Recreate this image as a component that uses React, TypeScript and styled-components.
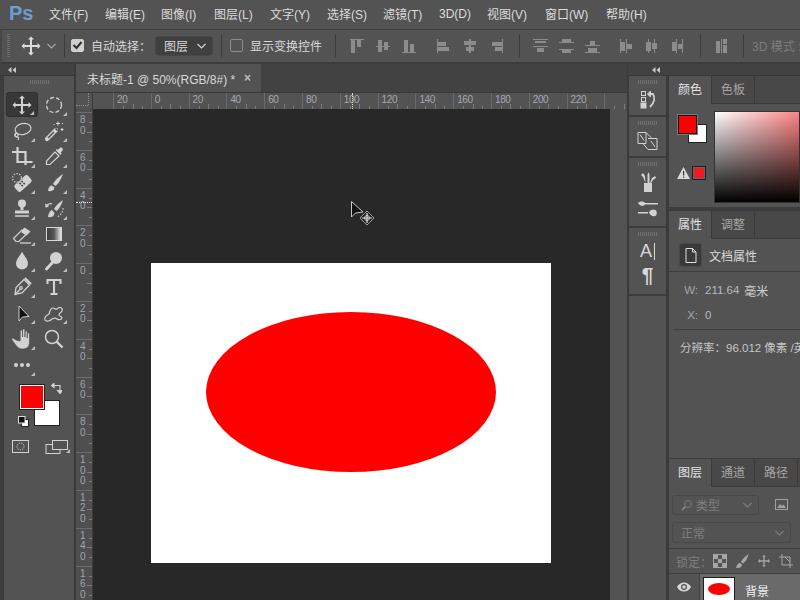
import React from "react";
import styled, { createGlobalStyle } from "styled-components";

const Global = createGlobalStyle`
  html, body { margin: 0; padding: 0; background: #535353; }
  * { box-sizing: border-box; }
`;
const FONT = `"Liberation Sans", "Noto Sans CJK SC", sans-serif`;

const Page = styled.div`
  width: 800px; height: 600px; overflow: hidden; display: flex; flex-direction: column;
  background: #535353; font-family: ${FONT}; font-size: 12px; color: #d8d8d8;
`;
const MenuBar = styled.div`
  height: 29px; flex: none; display: flex; align-items: center; padding-left: 9px; background: #535353;
`;
const Logo = styled.div`
  width: 40px; font-size: 20px; font-weight: 700; color: #6f9dcf; line-height: 24px; margin-top: -4px;
`;
const MenuItem = styled.div<{ $w: number }>`
  width: ${(p) => p.$w}px; flex: none; color: #dcdcdc; font-size: 12px; white-space: nowrap; margin-top: -2px;
`;
const OptionBar = styled.div`
  height: 35px; flex: none; display: flex; align-items: center; background: #535353;
  border-top: 1px solid #3e3e3e; border-bottom: 2px solid #3c3c3c; border-left: 2px solid #474747; padding-bottom: 1px;
`;
const Grip = styled.div`
  width: 3px; height: 23px; margin-left: 5px; flex: none;
  background: repeating-linear-gradient(to bottom, #6e6e6e 0 1px, transparent 1px 2px);
`;
const Slot = styled.div<{ $l: number }>`
  margin-left: ${(p) => p.$l}px; flex: none; display: flex; align-items: center;
`;
const MoveSlot = styled(Slot)`
  color: #dcdcdc;
`;
const ChevronSlot = styled(Slot)`
  color: #a8a8a8;
`;
const VSep = styled.div<{ $l: number }>`
  width: 1px; height: 23px; background: #3c3c3c; margin-left: ${(p) => p.$l}px; flex: none;
`;
const CheckBox = styled.div<{ $on?: boolean }>`
  width: 13px; height: 13px; border-radius: 2px; flex: none; display: flex; align-items: center; justify-content: center;
  background: ${(p) => (p.$on ? "#cfcfcf" : "transparent")};
  border: 1px solid ${(p) => (p.$on ? "#cfcfcf" : "#8d8d8d")};
`;
const OptLabel = styled.div<{ $dim?: boolean }>`
  color: ${(p) => (p.$dim ? "#7d7d7d" : "#d8d8d8")}; white-space: nowrap; font-size: 12px; letter-spacing: 0;
`;
const SelectBox = styled.div`
  width: 58px; height: 20px; background: #3f3f3f; border: 1px solid #484848; border-radius: 3px;
  display: flex; align-items: center; justify-content: space-between; padding: 0 6px 0 8px; color: #d8d8d8;
`;
const IconRow = styled.div<{ $gap: number }>`
  display: flex; gap: ${(p) => p.$gap}px; color: #8c8c8c;
`;

const Workspace = styled.div`
  flex: 1; display: flex; min-height: 0; background: #3d3d3d;
`;
const LeftDock = styled.div`
  width: 76px; flex: none; display: flex; flex-direction: column; background: #3d3d3d; border-right: 2px solid #3a3a3a;
`;
const CollapseStrip = styled.div<{ $pad: number }>`
  height: 12px; flex: none; background: #424242; border-bottom: 1px solid #383838; color: #c8c8c8;
  display: flex; align-items: center; padding-left: ${(p) => p.$pad}px;
`;
const ToolPanel = styled.div`
  flex: 1; margin-left: 3px; background: #535353; border-left: 1px solid #3a3a3a; padding-left: 2px;
`;
const PanelGrip = styled.div<{ $w?: number }>`
  width: ${(p) => p.$w ?? 20}px; height: 4px; margin: 4px auto 0;
  background: repeating-linear-gradient(to right, #6f6f6f 0 1px, transparent 1px 2px);
`;
const ToolGrid = styled.div`
  display: grid; grid-template-columns: 32px 32px; grid-auto-rows: 25px; row-gap: 1px; margin-top: 8px;
`;
const ToolCell = styled.div<{ $on?: boolean }>`
  position: relative; display: flex; align-items: center; justify-content: center; color: #d2d2d2;
  ${(p) => (p.$on ? "background:#383838;border:1px solid #2f2f2f;border-radius:3px;" : "")}
`;
const Corner = styled.span`
  position: absolute; right: 3px; bottom: 1px; width: 0; height: 0;
  border-left: 4px solid transparent; border-bottom: 4px solid #bdbdbd;
`;
const ColorWell = styled.div`
  position: relative; height: 46px; margin-top: 7px; margin-left: 0;
`;
const FgSwatch = styled.div`
  position: absolute; left: 13px; top: 0; width: 26px; height: 26px; z-index: 1; background: #ff0000;
  border: 1px solid #222; box-shadow: inset 0 0 0 1px #fff;
`;
const BgSwatch = styled.div`
  position: absolute; left: 28px; top: 16px; width: 26px; height: 26px; background: #fff; border: 1px solid #222;
`;
const SwapIcon = styled.div`
  position: absolute; left: 45px; top: -1px; color: #d2d2d2; line-height: 0;
`;
const DefaultIcon = styled.div`
  position: absolute; left: 12px; top: 32px; line-height: 0;
`;
const ModeRow = styled.div`
  display: flex; align-items: center; margin: 10px 0 0 6px; color: #d2d2d2; gap: 15px;
`;
const ScreenMode = styled.div`
  position: relative; width: 28px; height: 14px; line-height: 0; color: #d2d2d2;
`;

const DocArea = styled.div`
  flex: 1; min-width: 0; display: flex; flex-direction: column; background: #535353;
`;
const TabBar = styled.div`
  height: 29px; flex: none; display: flex; background: #424242; border-bottom: 1px solid #383838;
`;
const DocTab = styled.div`
  width: 185px; background: #535353; display: flex; align-items: center; justify-content: space-between;
  padding: 0 10px 0 11px; color: #d8d8d8; font-size: 12px; white-space: nowrap;
`;
const CloseMark = styled.span`
  font-size: 12px; font-weight: 700; color: #bdbdbd;
`;
const HRulerRow = styled.div`
  height: 16px; flex: none; display: flex; overflow: hidden;
`;
const RulerCorner = styled.div`
  width: 17px; flex: none; background: #535353; border-right: 1px solid #3a3a3a; position: relative;
`;
const CornerDotsV = styled.i`
  position: absolute; left: 12px; top: 0; height: 12px; border-left: 1px dotted #8a8a8a;
`;
const CornerDotsH = styled.i`
  position: absolute; left: 0; top: 12px; width: 12px; border-top: 1px dotted #8a8a8a;
`;
const HRuler = styled.div`
  flex: 1; display: flex; position: relative; overflow: hidden; background: #535353;
`;
const HLead = styled.div`
  width: 20px; flex: none;
`;
const HCell = styled.div`
  width: 37.8px; flex: none; height: 16px; border-left: 1px solid #6b6b6b; padding-left: 3px;
  font-size: 10px; line-height: 14px; color: #a3a9b0; letter-spacing: -0.4px;
  background-image:
    linear-gradient(#7a7a7a,#7a7a7a), linear-gradient(#7a7a7a,#7a7a7a), linear-gradient(#7a7a7a,#7a7a7a);
  background-repeat: no-repeat;
  background-size: 1px 3px, 1px 5px, 1px 3px;
  background-position: 9px 100%, 18.5px 100%, 28px 100%;
`;
const HMark = styled.i`
  position: absolute; left: 259px; top: 0; height: 16px; border-left: 1px dotted #e8e4a0;
`;
const CanvasRow = styled.div`
  flex: 1; display: flex; min-height: 0;
`;
const VRuler = styled.div`
  width: 17px; flex: none; position: relative; overflow: hidden; background: #4f4f4f; border-right: 1px solid #3c3c3c;
`;
const VLead = styled.div`
  height: 3px;
`;
const VCell = styled.div`
  height: 37.8px; border-top: 1px solid #6b6b6b; padding: 2px 0 0 4px; display: flex; flex-direction: column;
  font-size: 10px; line-height: 10.5px; color: #9ca6b2;
  background-image:
    linear-gradient(#7a7a7a,#7a7a7a), linear-gradient(#7a7a7a,#7a7a7a), linear-gradient(#7a7a7a,#7a7a7a);
  background-repeat: no-repeat;
  background-size: 3px 1px, 5px 1px, 3px 1px;
  background-position: 100% 9px, 100% 18.5px, 100% 28px;
`;
const VMark = styled.i`
  position: absolute; left: 0; top: 93px; width: 16px; border-top: 1px dotted #f0f0f0;
`;
const Canvas = styled.div`
  width: 517px; flex: none; position: relative; background: #282828; padding: 154px 0 0 58px;
`;
const Doc = styled.div`
  width: 400px; height: 300px; background: #fff; padding: 49px 0 0 55px;
`;
const Ellipse = styled.div`
  width: 290px; height: 160px; border-radius: 50%; background: #ff0000;
`;
const PointerWrap = styled.div`
  position: absolute; left: 257px; top: 91px; line-height: 0;
`;

const RightDock = styled.div`
  width: 173px; flex: none; display: flex; flex-direction: column; background: #3d3d3d; border-left: 1px solid #3c3c3c;
`;
const DockBody = styled.div`
  flex: 1; min-height: 0; display: flex;
`;
const IconColumn = styled.div`
  width: 40px; flex: none; display: flex; flex-direction: column; background: #535353;
  border-right: 2px solid #3a3a3a; border-left: 1px solid #3a3a3a;
`;
const IconGroup = styled.div<{ $h: number }>`
  height: ${(p) => p.$h}px; flex: none; display: flex; flex-direction: column; align-items: center; padding-top: 0;
  border-bottom: 2px solid #3c3c3c; color: #d2d2d2;
`;
const IconSlot = styled.div<{ $top?: number }>`
  height: 26px; flex: none; display: flex; align-items: center; justify-content: center; margin-top: ${(p) => p.$top ?? 0}px;
`;
const GlyphA = styled.div`
  height: 24px; margin-top: 3px; flex: none; display: flex; align-items: center; justify-content: center;
  font-size: 18px; color: #d8d8d8; line-height: 24px;
`;
const CaretBar = styled.i`
  display: block; width: 1px; height: 17px; margin-left: 2px; background: #d8d8d8;
`;
const GlyphPil = styled.div`
  height: 24px; flex: none; display: flex; align-items: center; justify-content: center;
  font-size: 21px; font-weight: 700; color: #d8d8d8; line-height: 24px;
`;
const PanelStack = styled.div`
  flex: 1; min-width: 0; display: flex; flex-direction: column;
`;
const Panel = styled.div<{ $h: number; $gap?: number }>`
  height: ${(p) => p.$h}px; flex: none; background: #535353; margin-bottom: ${(p) => p.$gap ?? 0}px;
  display: flex; flex-direction: column; border-left: 1px solid #3a3a3a; overflow: hidden;
`;
const Tabs = styled.div`
  height: 28px; flex: none; display: flex; background: #484848; border-bottom: 1px solid #3a3a3a;
`;
const Tab = styled.div<{ $on?: boolean }>`
  width: 43px; height: ${(p) => (p.$on ? 28 : 27)}px; flex: none; display: flex; align-items: center; justify-content: center;
  padding-bottom: 3px; font-size: 12px; background: ${(p) => (p.$on ? "#535353" : "#484848")};
  color: ${(p) => (p.$on ? "#e4e4e4" : "#a6a6a6")}; border-right: 1px solid #3a3a3a;
`;
const ColorBody = styled.div`
  flex: 1; display: flex; padding: 7px 0 0 9px;
`;
const ColorLeft = styled.div`
  width: 36px; flex: none; position: relative;
`;
const MiniFg = styled.div`
  position: absolute; left: 0; top: 4px; width: 19px; height: 19px; background: #ff0000; z-index: 1;
  border: 1px solid #111; box-shadow: 0 0 0 1px #777;
`;
const MiniBg = styled.div`
  position: absolute; left: 10px; top: 13px; width: 19px; height: 19px; background: #fff; border: 1px solid #222;
`;
const WarnRow = styled.div`
  position: absolute; left: -1px; top: 55px; display: flex; align-items: center; gap: 2px; line-height: 0;
`;
const WarnSwatch = styled.div`
  width: 14px; height: 14px; background: #ed1c24; border: 1px solid #1e1e1e; box-shadow: 0 0 0 1px #666 inset;
`;
const Spectrum = styled.div`
  flex: 1; height: 92px; margin-top: 0; border: 1px solid #333;
  background: linear-gradient(to top, #000, transparent), linear-gradient(to right, #fff, #ff6a6a 120%);
`;
const PropHead = styled.div`
  height: 33px; flex: none; display: flex; align-items: center; gap: 7px; padding: 0 0 0 10px; border-bottom: 1px solid #3e3e3e;
  color: #d8d8d8;
`;
const DocIconBox = styled.div`
  width: 23px; height: 24px; background: #3a3a3a; border: 1px solid #4a4a4a; border-radius: 3px;
  display: flex; align-items: center; justify-content: center; color: #e0e0e0;
`;
const PropRow = styled.div<{ $h: number }>`
  height: ${(p) => p.$h}px; flex: none; display: flex; align-items: center; white-space: nowrap; color: #b6b9bc; font-size: 11.5px;
`;
const PropKey = styled.span`
  width: 36px; text-align: right; padding-right: 7px; flex: none; color: #9da6b0;
`;
const PropUnit = styled.span`
  margin-left: 5px; font-size: 12px; color: #cfcfcf;
`;
const PropLine = styled.div`
  height: 1px; background: #3e3e3e; margin: 7px 0 0 4px;
`;
const ResRow = styled.div`
  padding: 9px 0 0 11px; color: #c6c6c6; font-size: 11.5px; white-space: nowrap;
`;
const FilterRow = styled.div<{ $h: number }>`
  height: ${(p) => p.$h}px; flex: none; display: flex; align-items: center; padding-left: 3px; color: #7f7f7f;
`;
const DimSelect = styled.div<{ $w: number; $h?: number }>`
  width: ${(p) => p.$w}px; height: ${(p) => p.$h ?? 20}px; border: 1px solid #494949; border-radius: 3px; flex: none;
  display: flex; align-items: center; justify-content: space-between; padding: 0 6px 0 8px; color: #7f7f7f; gap: 4px;
`;
const DimLabel = styled.div`
  display: flex; align-items: center; gap: 3px;
`;
const LockRow = styled.div`
  height: 26px; margin-top: 5px; flex: none; display: flex; align-items: center; border-top: 1px solid #3e3e3e;
  border-bottom: 1px solid #3e3e3e; padding-left: 7px; color: #7f7f7f; gap: 0;
`;
const LockIcons = styled.div`
  display: flex; gap: 8px; margin-left: 1px; color: #a6a6a6;
`;
const LayerRow = styled.div`
  flex: 1; display: flex; min-height: 26px;
`;
const EyeCell = styled.div`
  width: 31px; flex: none; display: flex; align-items: center; justify-content: center; color: #d8d8d8; border-right: 1px solid #3e3e3e;
`;
const LayerBody = styled.div`
  flex: 1; background: #6a6a6a; display: flex; align-items: flex-start; padding: 3px 0 0 3px; color: #f2f2f2; gap: 10px;
`;
const Thumb = styled.div`
  width: 32px; height: 30px; background: #fff; border: 1px solid #1e1e1e; flex: none; padding: 5px 0 0 4px;
`;
const ThumbOval = styled.div`
  width: 22px; height: 12px; border-radius: 50%; background: #ff0000;
`;
const LayerName = styled.div`
  margin-top: 5px; font-size: 12px;
`;

type P = { w?: number; h?: number; children?: React.ReactNode };
const Svg = ({ w = 22, h = 22, children }: P) => (
  <svg width={w} height={h} viewBox={`0 0 ${w} ${h}`} fill="none" stroke="currentColor" strokeWidth="1.2" style={{ display: "block" }}>
    {children}
  </svg>
);
const MOVE = "M11 1.5l3 3h-2v5.5h5.5V8l3 3-3 3v-2H12v5.5h2l-3 3-3-3h2V12H4.5v2l-3-3 3-3v2H10V4.5H8z";
const tools: Record<string, React.ReactNode> = {
  move: <Svg><path d={MOVE} fill="currentColor" stroke="none" /></Svg>,
  marquee: <Svg><circle cx="11" cy="11" r="7.5" strokeDasharray="4 2.2" strokeWidth="1.3" /></Svg>,
  lasso: <Svg><ellipse cx="12" cy="9" rx="8" ry="5.5" transform="rotate(-12 12 9)" /><path d="M5 13c-2 2-1 4 1 4s2 1 1 3" /><circle cx="5.5" cy="15" r="1.6" /></Svg>,
  wand: <Svg><path d="M4 19l9-9" stroke="currentColor" strokeWidth="4.2" strokeLinecap="round" /><path d="M5 18l6-6" stroke="#535353" strokeWidth="1.6" /><path d="M12.5 8.5l2 2" stroke="#333" strokeWidth="1.2" /><path d="M15 1.5v4M13 3.5h4M19 8v3M17.5 9.5h3M11 4v1M19.5 3v1" strokeWidth="1.1" /></Svg>,
  crop: <Svg><path d="M6.5 1v15h15M1 6h13.5v13" strokeWidth="2.2" /></Svg>,
  dropper: <Svg><path d="M12 6L3.5 15v3.5H7L16 10z" strokeWidth="1.2" /><path d="M13 4.5l4.5 4.5 1.2-1.2-1-1 2-2.5c1-1.5-1-3.5-2.5-2.5l-2.5 2-1-1z" fill="currentColor" stroke="none" /></Svg>,
  heal: <Svg><rect x="3" y="7" width="18" height="9" rx="2.5" transform="rotate(-42 12 11.5)" fill="currentColor" stroke="none" /><path d="M10.5 9l1.3 1.3M8.5 11l1.3 1.3M12.5 11l1.3 1.3M10.5 13l1.3 1.3" stroke="#444" strokeWidth="1.6" /><circle cx="6" cy="6" r="4.4" strokeDasharray="1.4 1.4" stroke="#535353" strokeWidth="2" /><circle cx="6" cy="6" r="4.4" strokeDasharray="1.4 1.4" /></Svg>,
  brush: <Svg><path d="M20 2c-3 2-8 6-10 10l2.5 2c3-2 6-8 7.500-12z" fill="currentColor" stroke="none" /><path d="M9 13.500c-2.500 0-3.500 2-4 5.500 3 .5 6 0 6.500-3.500z" fill="currentColor" stroke="none" /></Svg>,
  stamp: <Svg><circle cx="11" cy="5.500" r="4" fill="currentColor" stroke="none" /><path d="M9.500 9h3v3h-3zM4 12.500h14v3H4z" fill="currentColor" stroke="none" /><path d="M4 18h14" strokeWidth="1.500" /></Svg>,
  history: <Svg><path d="M20 2c-3 2-7 5-9 9l2.500 2c3-2 5-7 6.500-11z" fill="currentColor" stroke="none" /><path d="M9 12c-2 .5-3.500 3-4 7 3 .5 6 0 6.500-4z" fill="currentColor" stroke="none" /><path d="M3 9c1-3 4-4 6-3" strokeWidth="1.200" /><path d="M2 5.500l.8 4.300 3.700-1.700z" fill="currentColor" stroke="none" /><path d="M20 10c0 4-2 7-6 9" strokeDasharray="1.500 1.500" /></Svg>,
  eraser: <Svg><path d="M2.500 14.500L11 6l5 3.500-8 8H5z" /><path d="M11 6l2.500-2.500 6 4-4 4-5-3z" fill="currentColor" stroke="none" /><path d="M9 19h11" strokeWidth="1.300" /></Svg>,
  gradient: <Svg><defs><linearGradient id="gr"><stop offset="0" stopColor="#3c3c3c" /><stop offset="0.5" stopColor="#555" /><stop offset="1" stopColor="#f2f2f2" /></linearGradient></defs><rect x="3.500" y="3.500" width="15" height="13" fill="url(#gr)" stroke="#d8d8d8" strokeWidth="1" /></Svg>,
  drop: <Svg><path d="M11 1.500c-1.500 4-6 7.500-6 12a6 6 0 0012 0c0-4.500-4.500-8-6-12z" fill="currentColor" stroke="none" /></Svg>,
  dodge: <Svg><circle cx="13" cy="8" r="6" fill="currentColor" stroke="none" /><path d="M9 13l-5.500 6" strokeWidth="3" strokeLinecap="round" /></Svg>,
  pen: <Svg><path d="M4 18.500l1-7L13 3.500l5.500 5.500L11 17z" strokeWidth="1.300" /><path d="M4 18.500l5-5" /><circle cx="10" cy="12" r="1.300" /><path d="M14 2l6 6" strokeWidth="2" /></Svg>,
  text: <Svg><path d="M4.500 8V4h13v4M11 4v14M7.500 18h7" strokeWidth="2.100" /></Svg>,
  arrow: <Svg><path d="M8 4v15l3.500-4 6.500-.5z" fill="#111" stroke="#cfcfcf" strokeWidth="1" /></Svg>,
  blob: <Svg><path d="M2 18c-1-3 2-5 4-6 1-2 1-6 4-6 2 0 2 2 4 1 3-3 6-1 5 2-1 2-3 2-3 4 1 2 3 1 3 3s-4 2-5 1-3-1-5 0c-2 2-6 3-7 1z" strokeWidth="1.200" /></Svg>,
  hand: <Svg><path d="M5 12l-3-2c-1 0-1.500 1-1 2l4.500 6c1.500 2 3 3 6 3 4 0 7-2 7-7V6c0-1.500-2-1.500-2.300 0v4-6c0-1.500-2.200-1.500-2.300 0v5-7c0-1.500-2.300-1.500-2.400 0v7-5C11.500 1.500 9.200 1.500 9.200 3v9l-.2 1z" fill="currentColor" stroke="#535353" strokeWidth=".7" /></Svg>,
  zoom: <Svg><circle cx="9" cy="9" r="6.500" strokeWidth="1.500" /><path d="M13.500 13.500l6 6" strokeWidth="2.400" /></Svg>,
  dots: <Svg><circle cx="5" cy="11" r="2" fill="currentColor" stroke="none" /><circle cx="11" cy="11" r="2" fill="currentColor" stroke="none" /><circle cx="17" cy="11" r="2" fill="currentColor" stroke="none" /></Svg>,
};
const toolList: [string, boolean][] = [
  ["move", true], ["marquee", true], ["lasso", true], ["wand", true], ["crop", true], ["dropper", true],
  ["heal", true], ["brush", true], ["stamp", true], ["history", true], ["eraser", true], ["gradient", true],
  ["drop", true], ["dodge", true], ["pen", true], ["text", false], ["arrow", true], ["blob", true],
  ["hand", true], ["zoom", false], ["dots", true],
];
const Chevron = () => (
  <svg width="9" height="6" viewBox="0 0 9 6" fill="none" stroke="currentColor" strokeWidth="1.100"><path d="M.5 1l4 4 4-4" /></svg>
);
const DoubleLeft = () => (
  <svg width="8" height="6" viewBox="0 0 8 6" fill="currentColor"><path d="M3.500 0v6L0 3zM8 0v6L4.500 3z" /></svg>
);
const Align = ({ r }: { r: number[][] }) => (
  <svg width="15" height="14" viewBox="0 0 15 14" fill="currentColor">
    {r.map((a, i) => <rect key={i} x={a[0]} y={a[1]} width={a[2]} height={a[3]} />)}
  </svg>
);
const aligns: number[][][][] = [
  [
    [[0, 0, 14, 1], [1, 1, 4, 13], [7, 1, 4, 7]],
    [[0, 7, 14, 1], [2, 1, 4, 12], [8, 3, 4, 8]],
    [[0, 13, 14, 1], [2, 1, 4, 12], [8, 5, 4, 8]],
  ],
  [
    [[0, 0, 1, 14], [1, 3, 8, 4], [1, 8, 11, 4]],
    [[6, 0, 2, 14], [1, 2, 12, 4], [3, 8, 8, 4]],
    [[13, 0, 1, 14], [3, 3, 10, 4], [6, 8, 7, 4]],
  ],
  [
    [[0, 0, 15, 1], [2, 2, 11, 2], [0, 7, 15, 1], [4, 9, 7, 4]],
    [[0, 3, 15, 1], [3, 0, 9, 3], [0, 10, 15, 1], [3, 11, 9, 3]],
    [[0, 13, 15, 1], [3, 9, 9, 4], [0, 6, 15, 1], [5, 2, 5, 4]],
  ],
  [
    [[0, 0, 1, 14], [1, 3, 4, 9], [6, 0, 1, 14], [7, 5, 5, 5]],
    [[2, 0, 1, 14], [0, 3, 5, 9], [8, 0, 1, 14], [6, 4, 5, 6]],
    [[0, 3, 4, 9], [4, 0, 1, 14], [6, 5, 4, 5], [10, 0, 1, 14]],
  ],
];
const RULER_H = ["20", "0", "20", "40", "60", "80", "100", "120", "140", "160", "180", "200", "220", ""];
const RULER_V = ["80", "60", "40", "20", "0", "20", "40", "60", "80", "100", "120", "140", "160"];

const App: React.FC = () => (
  <Page>
    <Global />
    <MenuBar>
      <Logo>Ps</Logo>
      <MenuItem $w={56}>文件(F)</MenuItem>
      <MenuItem $w={56}>编辑(E)</MenuItem>
      <MenuItem $w={53}>图像(I)</MenuItem>
      <MenuItem $w={56}>图层(L)</MenuItem>
      <MenuItem $w={57}>文字(Y)</MenuItem>
      <MenuItem $w={56}>选择(S)</MenuItem>
      <MenuItem $w={56}>滤镜(T)</MenuItem>
      <MenuItem $w={48}>3D(D)</MenuItem>
      <MenuItem $w={58}>视图(V)</MenuItem>
      <MenuItem $w={61}>窗口(W)</MenuItem>
      <MenuItem $w={50}>帮助(H)</MenuItem>
    </MenuBar>
    <OptionBar>
      <Grip />
      <MoveSlot $l={10}>{tools.move}</MoveSlot>
      <ChevronSlot $l={5}><Chevron /></ChevronSlot>
      <VSep $l={8} />
      <Slot $l={6}>
        <CheckBox $on>
          <svg width="11" height="9" viewBox="0 0 11 9" fill="none" stroke="#2e2e2e" strokeWidth="2"><path d="M1.500 4l3 3 5-6" /></svg>
        </CheckBox>
      </Slot>
      <Slot $l={7}><OptLabel>自动选择：</OptLabel></Slot>
      <Slot $l={4}><SelectBox>图层<Chevron /></SelectBox></Slot>
      <VSep $l={8} />
      <Slot $l={8}><CheckBox /></Slot>
      <Slot $l={7}><OptLabel>显示变换控件</OptLabel></Slot>
      <VSep $l={13} />
      <Slot $l={14}><IconRow $gap={11}>{aligns[0].map((r, i) => <Align key={i} r={r} />)}</IconRow></Slot>
      <Slot $l={20}><IconRow $gap={11}>{aligns[1].map((r, i) => <Align key={i} r={r} />)}</IconRow></Slot>
      <VSep $l={15} />
      <Slot $l={13}><IconRow $gap={11}>{aligns[2].map((r, i) => <Align key={i} r={r} />)}</IconRow></Slot>
      <Slot $l={20}><IconRow $gap={11}>{aligns[3].map((r, i) => <Align key={i} r={r} />)}</IconRow></Slot>
      <VSep $l={13} />
      <Slot $l={15}><IconRow $gap={0}><Align r={[[0, 2, 4, 12], [5, 0, 1, 14], [7, 0, 4, 5], [7, 6, 4, 8]]} /></IconRow></Slot>
      <VSep $l={12} />
      <Slot $l={8}><OptLabel $dim>3D 模式 :</OptLabel></Slot>
    </OptionBar>
    <Workspace>
      <LeftDock>
        <CollapseStrip $pad={8}><DoubleLeft /></CollapseStrip>
        <ToolPanel>
          <PanelGrip />
          <ToolGrid>
            {toolList.map(([k, c], i) => (
              <ToolCell key={k} $on={i === 0}>
                {tools[k]}
                {c && <Corner />}
              </ToolCell>
            ))}
          </ToolGrid>
          <ColorWell>
            <FgSwatch />
            <BgSwatch />
            <SwapIcon>
              <svg width="11" height="11" viewBox="0 0 11 11" fill="none" stroke="currentColor" strokeWidth="1.100">
                <path d="M2 2.500h7V8" /><path d="M3 .5L.5 2.500 3 4.500z" fill="currentColor" /><path d="M6.500 7.500h5L9 10.500z" fill="currentColor" />
              </svg>
            </SwapIcon>
            <DefaultIcon>
              <svg width="11" height="11" viewBox="0 0 11 11"><rect x="3.500" y="3.500" width="7" height="7" fill="#fff" stroke="#222" /><rect x=".5" y=".5" width="6.500" height="6.500" fill="#111" stroke="#ddd" /></svg>
            </DefaultIcon>
          </ColorWell>
          <ModeRow>
            <svg width="18" height="14" viewBox="0 0 18 14" fill="none" stroke="currentColor"><rect x=".5" y=".5" width="16" height="12" /><circle cx="8.500" cy="6.500" r="3.500" strokeDasharray="1.200 1.200" /></svg>
            <ScreenMode>
              <svg width="24" height="14" viewBox="0 0 24 14" fill="none" stroke="currentColor"><rect x="1" y="4.500" width="14" height="9" fill="#535353" /><rect x="7.500" y=".5" width="15" height="9" fill="#535353" /></svg>
              <Corner />
            </ScreenMode>
          </ModeRow>
        </ToolPanel>
      </LeftDock>
      <DocArea>
        <TabBar>
          <DocTab>未标题-1 @ 50%(RGB/8#) *<CloseMark>×</CloseMark></DocTab>
        </TabBar>
        <HRulerRow>
          <RulerCorner><CornerDotsV /><CornerDotsH /></RulerCorner>
          <HRuler>
            <HLead />
            {RULER_H.map((t, i) => <HCell key={i}>{t}</HCell>)}
            <HMark />
          </HRuler>
        </HRulerRow>
        <CanvasRow>
          <VRuler>
            <VLead />
            {RULER_V.map((t, i) => (
              <VCell key={i}>{t.split("").map((d, j) => <span key={j}>{d}</span>)}</VCell>
            ))}
            <VMark />
          </VRuler>
          <Canvas>
            <Doc><Ellipse /></Doc>
            <PointerWrap>
              <svg width="26" height="28" viewBox="0 0 26 28" fill="none">
                <path d="M1.500 1.500v15.500l4-4 7.500-1z" fill="#111" stroke="#c8c8c8" strokeWidth="1" />
                <path d="M17 11l7 7-7 7-7-7z" fill="#222" stroke="#bdbdbd" strokeWidth=".8" />
                <path d="M17 13v10M12 18h10" stroke="#e8e8e8" strokeWidth="1.200" />
                <circle cx="17" cy="18" r="2.500" stroke="#e8e8e8" strokeWidth=".8" />
              </svg>
            </PointerWrap>
          </Canvas>
        </CanvasRow>
      </DocArea>
      <RightDock>
        <CollapseStrip $pad={24}><DoubleLeft /></CollapseStrip>
        <DockBody>
          <IconColumn>
            <IconGroup $h={41}>
              <PanelGrip />
              <IconSlot $top={3}>
                <svg width="20" height="20" viewBox="0 0 20 20" fill="none" stroke="currentColor">
                  <rect x="3.500" y="1.500" width="4" height="4" /><rect x="3.500" y="7.500" width="4" height="4" /><rect x="3" y="13" width="5" height="5" fill="currentColor" />
                  <path d="M11 4h4c2 3 2 8-3 13" strokeWidth="1.800" /><path d="M12.500 1l-3 3 3 3z" fill="currentColor" />
                </svg>
              </IconSlot>
            </IconGroup>
            <IconGroup $h={41}>
              <PanelGrip />
              <IconSlot $top={3}>
                <svg width="22" height="20" viewBox="0 0 22 20" fill="none" stroke="currentColor">
                  <path d="M1 1.500h8v11H1z" /><path d="M9 1.500l6 6h5v11h-9l-5-6" /><path d="M11 7.500h4M3 3.500l4 6M14 10l4 6" />
                </svg>
              </IconSlot>
            </IconGroup>
            <IconGroup $h={70}>
              <PanelGrip />
              <IconSlot $top={3}>
                <svg width="18" height="22" viewBox="0 0 18 22" fill="currentColor">
                  <rect x="5" y="12" width="8" height="9" />
                  <path d="M6.500 12L4 6 2 4l2-2 2 3zM8.500 12V4l1-3 1 3v8zM11 12l2-5 3-2 1 2-3 2-2 3z" />
                </svg>
              </IconSlot>
              <IconSlot>
                <svg width="20" height="18" viewBox="0 0 20 18" fill="currentColor">
                  <path d="M0 4c2-2 6-2 7 0h13v1.500H7c-1 2-5 2-7-1.500z" /><path d="M0 13h10v1.500H0zM11 13.500c1-3 5-4 7-2 1 1 1 4 0 5-2 2-6 0-7-3z" />
                </svg>
              </IconSlot>
            </IconGroup>
            <IconGroup $h={68}>
              <PanelGrip />
              <GlyphA>A<CaretBar /></GlyphA>
              <GlyphPil>¶</GlyphPil>
            </IconGroup>
          </IconColumn>
          <PanelStack>
            <Panel $h={131} $gap={4}>
              <Tabs><Tab $on>颜色</Tab><Tab>色板</Tab></Tabs>
              <ColorBody>
                <ColorLeft>
                  <MiniBg />
                  <MiniFg />
                  <WarnRow>
                    <svg width="13" height="12" viewBox="0 0 13 12"><path d="M6.500 0L13 12H0z" fill="#d8d8d8" /><path d="M6 4h1.200v4.500H6zM6 9.500h1.200v1.300H6z" fill="#333" /></svg>
                    <WarnSwatch />
                  </WarnRow>
                </ColorLeft>
                <Spectrum />
              </ColorBody>
            </Panel>
            <Panel $h={247} $gap={1}>
              <Tabs><Tab $on>属性</Tab><Tab>调整</Tab></Tabs>
              <PropHead>
                <DocIconBox>
                  <svg width="12" height="15" viewBox="0 0 12 15" fill="none" stroke="currentColor"><path d="M1 .5h6.500L11 4v10.500H1z" /><path d="M7.500 .5V4H11" /></svg>
                </DocIconBox>
                文档属性
              </PropHead>
              <PropRow $h={36}><PropKey>W:</PropKey>211.64<PropUnit>毫米</PropUnit></PropRow>
              <PropRow $h={14}><PropKey>X:</PropKey>0</PropRow>
              <PropLine />
              <ResRow>分辨率：96.012 像素 /英</ResRow>
            </Panel>
            <Panel $h={141}>
              <Tabs><Tab $on>图层</Tab><Tab>通道</Tab><Tab>路径</Tab></Tabs>
              <FilterRow $h={35}>
                <DimSelect $w={87}>
                  <DimLabel>
                    <svg width="12" height="12" viewBox="0 0 12 12" fill="none" stroke="currentColor"><circle cx="7" cy="5" r="3.500" /><path d="M4.500 7.500L1 11" strokeWidth="1.800" /></svg>
                    类型
                  </DimLabel>
                  <Chevron />
                </DimSelect>
                <Slot $l={16}>
                  <svg width="13" height="11" viewBox="0 0 13 11" fill="none" stroke="#a0a0a0"><rect x=".5" y=".5" width="12" height="10" /><path d="M2 9l3-4 2 2 1.500-1.500L11 9z" fill="#a0a0a0" stroke="none" /></svg>
                </Slot>
              </FilterRow>
              <FilterRow $h={21}>
                <DimSelect $w={119} $h={21}>正常<Chevron /></DimSelect>
              </FilterRow>
              <LockRow>
                锁定：
                <LockIcons>
                  <svg width="14" height="14" viewBox="0 0 14 14" fill="currentColor" stroke="none">
                    <path d="M1 1h4v4H1zM9 1h4v4H9zM5 5h4v4H5zM1 9h4v4H1zM9 9h4v4H9z" /><rect x=".5" y=".5" width="13" height="13" fill="none" stroke="currentColor" />
                  </svg>
                  <svg width="14" height="14" viewBox="0 0 14 14" fill="currentColor"><path d="M13.500 0C11 2 7 5 6 8l2 1.500c3-2 5-6 5.500-9.500z" /><path d="M5 9c-2 0-3 1.500-4 5 3 0 6-.5 6-3.500z" /></svg>
                  <svg width="14" height="14" viewBox="0 0 22 22" fill="currentColor"><path d={MOVE} /></svg>
                  <svg width="15" height="14" viewBox="0 0 15 14" fill="none" stroke="currentColor"><path d="M3 0v11h11M0 3h11v11" /><path d="M6 3l5 5" /></svg>
                </LockIcons>
              </LockRow>
              <LayerRow>
                <EyeCell>
                  <svg width="14" height="10" viewBox="0 0 14 10" fill="currentColor"><path d="M0 5c3-6 11-6 14 0-3 6-11 6-14 0z" /><circle cx="7" cy="5" r="3" fill="#535353" /><circle cx="7" cy="5" r="1.700" /></svg>
                </EyeCell>
                <LayerBody>
                  <Thumb><ThumbOval /></Thumb>
                  <LayerName>背景</LayerName>
                </LayerBody>
              </LayerRow>
            </Panel>
          </PanelStack>
        </DockBody>
      </RightDock>
    </Workspace>
  </Page>
);
export default App;
